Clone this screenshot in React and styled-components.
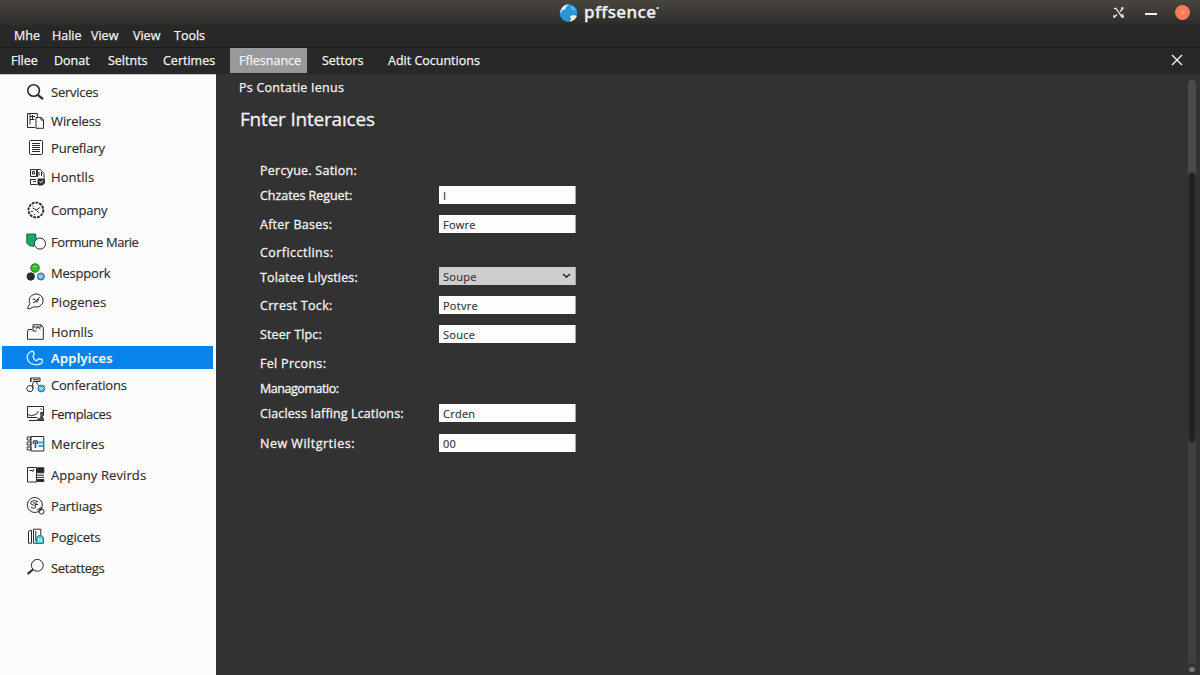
import React from 'react'
import styled, { createGlobalStyle } from 'styled-components'

const GlobalStyle = createGlobalStyle`
  * {
    box-sizing: border-box;
  }

  body {
    margin: 0;
    background: #323232;
    font-family: 'Open Sans', 'Noto Sans', sans-serif;
    overflow: hidden;
  }
`

const icons = {
  search: (
    <>
      <circle cx="7.6" cy="8.5" r="5.8" strokeWidth="1.6" />
      <path d="M11.8 12.8L17 17.2" strokeWidth="2.2" />
    </>
  ),
  wireless: (
    <>
      <path d="M9 16.5H1.5v-14h9.8v3.3M4 2.5v10.8M4 5.5h5M6.5 4v4M4 8.5h4.5" />
      <path d="M10 6.5h5l2.5 2.3v8.5H10zM15 6.5V9h2.5" />
    </>
  ),
  list: (
    <>
      <rect x="3.5" y="2.5" width="13" height="14" rx="1" />
      <path d="M6 5.5h8M6 7.5h8M6 9.5h8M6 11.5h8M6 13.5h8" />
    </>
  ),
  docs: (
    <>
      <path d="M4.5 9.5v-7h6v7zM6.5 4.5h2V7h-2zM11.5 10V2.5h3l3.5 4v5M13 5v3.5M15.5 5v4M4.5 12v5.5H11M4.5 12.500H10M7 14.5h3" />
      <path d="M12 12h6.500v4l-2 2H12z" fill="#333" />
      <path d="M13.500 14.500l1.500 1.200 2-2.200" stroke="#fff" />
    </>
  ),
  gauge: (
    <>
      <circle cx="9.9" cy="10" r="7.4" strokeWidth="1.9" strokeDasharray="2.8 1" />
      <path d="M6.5 8l3.800 2 3.500-2.500M10.300 10l2.700 3M5 11.500h2M8 14l1 1M6.500 5.500l1 1" />
    </>
  ),
  shield: (
    <>
      <path d="M.8 2h8.800l1 8-3 4.500L3 13.500 .8 11z" fill="#12ad62" stroke="#126b42" />
      <circle cx="14" cy="11.6" r="5.6" fill="#fff" />
    </>
  ),
  people: (
    <>
      <circle cx="9" cy="5" r="4.2" fill="#31bd31" stroke="#16711c" />
      <circle cx="4.7" cy="13.5" r="3.7" fill="#292d2b" />
      <circle cx="14.9" cy="13.5" r="3.5" fill="#70b2e2" stroke="#285f8c" />
      <path d="M7 4q2-2 4 0" stroke="#83ed6d" />
      <path d="M13 12.500l2 2 1.500-2" stroke="#d8efff" />
    </>
  ),
  bubble: (
    <>
      <path d="M3.900 11.500a7 6.600 0 1 1 4 3.300L3.500 16.800l-2.200-.5z" />
      <path d="M6.800 8q1.500-2.500 2.500 0t2.500-1l2-2M7 10.800l2-1.200 2 .5 1.800-3" />
    </>
  ),
  bag: (
    <>
      <path d="M6 7.500H3.200q-1.700 0-1.700 2v7.800h15.800V5.500l-2-2.700H7v6.200h3.500" />
      <path d="M7 5h7.500M10 7.200l2-2 2.500 2M15 3v2.500" />
    </>
  ),
  phone: (
    <path
      d="M5 3.500Q1 5.500 1.200 9.500q.8 6.500 8 7.200 5.500 0 7-2.400l.1-2.800-3.500-.7-2.200 2q-3.300-1.600-3.500-4.600l1.200-2.500L7.200 3.500z"
      strokeWidth="1.3"
    />
  ),
  network: (
    <>
      <path d="M4.500 7V3h9.500v3.500H7.500L6 11M10 6.500l2.500 4M5 3v4M7 4.800h6" />
      <circle cx="3.9" cy="13.6" r="3.1" />
      <path d="M7 10.500v3.500" />
      <circle cx="15.3" cy="13.5" r="3.4" fill="#56b9df" stroke="#216e91" />
      <path d="M13.500 13l2 1.500 1.500-2" stroke="#fff" />
    </>
  ),
  screen: (
    <>
      <path d="M17.500 8V2.500H1.500v11h10M1.500 10.500l4 1.200 5-1.500 2-3M3 16.500h9M14.500 4.500l1.500 1.500" />
      <path d="M14 9l3.500-1v3.500l-3 1.500M11 15.800l5.500-3 1.200 3.700h-5z" fill="#555" />
    </>
  ),
  card: (
    <>
      <path d="M5 2.500h12.800v14.500H5z" />
      <path d="M1.200 3h3.500v3H1.200zM1.200 8h3.500v3H1.200zM1.200 13h3.500v3H1.200z" />
      <path d="M7.500 10V7.500q2-1.500 4 0v2.500M9.500 8v6" stroke="#285d7c" strokeWidth="1.6" />
      <path d="M12.500 8.500H17M12.500 12H17" stroke="#3da6cb" strokeWidth="1.8" />
    </>
  ),
  report: (
    <>
      <path d="M10.500 2.500h-9V17h9zM3.500 5.500h3M8 4l-1.500 3" />
      <path d="M11.500 2.800h6.300v5h-6.300zM11.500 14.500h6.300v2h-6.300z" fill="#252525" />
      <path d="M11 10.200h7M11 12.400h7" />
    </>
  ),
  coin: (
    <>
      <circle cx="8.8" cy="9" r="7.5" />
      <path d="M12 5.700Q8 3.300 5.300 5.500q-2 3 2.800 3.700 3 .8 1.300 2.600-2 1.300-4.400-.7M7 7h4M9 8.500h3" />
      <circle cx="15.5" cy="15.5" r="2.6" />
      <path d="M11 14l5-3M12 16l4.500-3" />
    </>
  ),
  books: (
    <>
      <path d="M2.500 4.200l3-1v13h-3zM7.500 2.200h7.300v14H7.500zM9.800 4v10" />
      <path d="M10.500 10.500l2-2h3l2 2v6h-7z" fill="#45bfdf" stroke="#247f9d" />
      <path d="M12.500 14.500v-2.700h2.800v2.700h-2" stroke="#e9fbff" />
    </>
  ),
  magnifier: (
    <>
      <circle cx="11.3" cy="7.3" r="5.9" />
      <path d="M7 11.500L1.700 15.800" strokeWidth="2.2" />
    </>
  ),
}

// gap is the space above the row, track the letter spacing, both in px
const sidebarItems = [
  { icon: 'search', text: 'Services', gap: 5, track: -0.25 },
  { icon: 'wireless', text: 'Wireless', gap: 6, track: -0.12 },
  { icon: 'list', text: 'Pureflary', gap: 4, track: -0.15 },
  { icon: 'docs', text: 'Hontlls', gap: 6, track: 0.05 },
  { icon: 'gauge', text: 'Company', gap: 10, track: -0.2 },
  { icon: 'shield', text: 'Formune Marie', gap: 9, track: -0.45 },
  { icon: 'people', text: 'Mesppork', gap: 8, track: -0.2 },
  { icon: 'bubble', text: 'Piogenes', gap: 6, track: 0.05 },
  { icon: 'bag', text: 'Homlls', gap: 7 },
  { icon: 'phone', text: 'Applyices', gap: 3, track: 0.3, active: true },
  { icon: 'network', text: 'Conferations', gap: 4, track: -0.2 },
  { icon: 'screen', text: 'Femplaces', gap: 6, track: -0.45 },
  { icon: 'card', text: 'Mercires', gap: 7, track: 0.1 },
  { icon: 'report', text: 'Appany Revirds', gap: 8, track: 0.1 },
  { icon: 'coin', text: 'Partiıags', gap: 8, track: -0.1 },
  { icon: 'books', text: 'Pogicets', gap: 8, track: -0.1 },
  { icon: 'magnifier', text: 'Setattegs', gap: 8, track: -0.3 },
]

const fields = [
  { label: 'Percyue. Sation:', gap: 0, track: 0.25 },
  { label: 'Chzates Reguet:', value: 'I', gap: 6, track: -0.05 },
  { label: 'After Bases:', value: 'Fowre', gap: 10, track: 0.25 },
  { label: 'Corficctlins:', gap: 9, track: 0.45 },
  { label: 'Tolatee Lılysties:', value: 'Soupe', gap: 5, track: 0.15, select: true },
  { label: 'Crrest Tock:', value: 'Potvre', gap: 10, track: 0.3 },
  { label: 'Steer Tlpc:', value: 'Souce', gap: 10, track: 0.1 },
  { label: 'Fel Prcons:', gap: 10, track: 0.3 },
  { label: 'Managomatio:', gap: 6, track: -0.45 },
  { label: 'Ciacless Iaffing Lcations:', value: 'Crden', gap: 6, track: 0.12 },
  { label: 'New Wiltgrties:', value: '00', gap: 11, track: 0.5 },
]

const App = () => {
  return (
    <Window>
      <GlobalStyle />
      <TitleBar>
        <span />
        <Brand>
          <svg width="19" height="18" viewBox="0 0 19 18">
            <circle cx="9.5" cy="9" r="8.8" fill="#2797da" />
            <path d="M3 4Q5 .5 10 .3L7.5 2.5 6 5.5 3.5 6 2 8.5 .8 9z" fill="#e9efd9" />
            <path d="M11 12l4-1 3 1q-1.500 4-7 5.800L12 15z" fill="#f0edcf" />
            <path d="M11 2l4 1 2 4-4-1z" fill="#58b9e9" />
          </svg>
          <BrandName>pffsence<sup>•</sup></BrandName>
        </Brand>
        <Controls>
          <svg width="12" height="12" viewBox="0 0 12 12" fill="none" stroke="#e8e8e2" strokeWidth="1.3">
            <path d="M1 1.500h2L9 10h2M1 10.500l3-3M7 4.500l3-3M8 1h2.500M1 8v3M8.500 7l2 2" />
          </svg>
          <Minimize />
          <Close />
        </Controls>
      </TitleBar>

      <MenuBar>
        <MenuItem $width={38}>Mhe</MenuItem>
        <MenuItem $width={39}>Halie</MenuItem>
        <MenuItem $width={42}>View</MenuItem>
        <MenuItem $width={41}>View</MenuItem>
        <MenuItem $width={40}>Tools</MenuItem>
      </MenuBar>

      <TabBar>
        <Tab $width={43}>Fllee</Tab>
        <Tab $width={54}>Donat</Tab>
        <Tab $width={55}>Seltnts</Tab>
        <Tab $width={67}>Certimes</Tab>
        <Tab $width={77} $active>Fflesnance</Tab>
        <Tab $width={81} $indent={15}>Settors</Tab>
        <Tab $width={110}>Adit Cocuntions</Tab>
        <TabClose>
          <svg width="12" height="12" viewBox="0 0 12 12" stroke="#f2f2f2" strokeWidth="1.4">
            <path d="M1 1l10 10M11 1L1 11" />
          </svg>
        </TabClose>
      </TabBar>

      <Body>
        <Sidebar>
          {sidebarItems.map((item) => (
            <SidebarItem key={item.icon} $gap={item.gap} $track={item.track} $active={item.active}>
              <Icon viewBox="0 0 20 20" $active={item.active}>{icons[item.icon]}</Icon>
              {item.text}
            </SidebarItem>
          ))}
        </Sidebar>

        <Content>
          <Crumb>Ps Contatie Ienus</Crumb>
          <Heading>Fnter Interaıces</Heading>
          <Form>
            {fields.map((field) => (
              <Field key={field.label} $gap={field.gap}>
                <Label $drop={field.select ? 2 : 1} $track={field.track}>{field.label}</Label>
                {field.value && (
                  <Input $select={field.select}>
                    {field.value}
                    {field.select && (
                      <svg width="9" height="6" viewBox="0 0 9 6" fill="none" stroke="#222" strokeWidth="1.5">
                        <path d="M1 1l3.500 3L8 1" />
                      </svg>
                    )}
                  </Input>
                )}
              </Field>
            ))}
          </Form>
        </Content>

        <Scroll>
          <Track>
            <Thumb />
          </Track>
          <ScrollEnd />
        </Scroll>
      </Body>
    </Window>
  )
}

const Window = styled.div`
  width: 1200px;
  height: 675px;
  display: flex;
  flex-direction: column;
  color: #f2f2f2;
  background: #323232;
`

const TitleBar = styled.header`
  height: 25px;
  display: grid;
  grid-template-columns: 559px 1fr auto;
  align-items: center;
  background: linear-gradient(#47453d, #3b3a34 50%, #2c2c2a);
`

const Brand = styled.div`
  display: flex;
  align-items: center;
  gap: 6px;
  height: 24px;
`

const BrandName = styled.div`
  font-family: 'Noto Sans', sans-serif;
  font-size: 17px;
  line-height: 22px;
  font-weight: 500;
  letter-spacing: 0.35px;
  -webkit-text-stroke: 0.3px;
  margin-top: -1px;

  sup {
    font-size: 7px;
    line-height: 0;
    vertical-align: 7px;
    letter-spacing: 0;
  }
`

const Controls = styled.div`
  display: flex;
  align-items: center;
  padding-right: 10px;
  height: 24px;
`

const Minimize = styled.div`
  width: 12px;
  height: 2px;
  margin: 2px 18px 0 20px;
  background: #eeeeea;
`

const Close = styled.div`
  width: 15px;
  height: 15px;
  border-radius: 50%;
  background: radial-gradient(circle, #ff9a78 0 1.5px, #f77c58 2.5px);
`

const MenuBar = styled.nav`
  height: 22px;
  display: flex;
  align-items: center;
  padding: 0 0 1px 14px;
  background: #282828;
  font-size: 12.5px;
  -webkit-text-stroke: 0.25px;
`

const MenuItem = styled.div`
  width: ${({ $width }) => $width}px;
  white-space: nowrap;
`

const TabBar = styled.nav`
  height: 27px;
  display: flex;
  align-items: center;
  padding: 0 0 1px 11px;
  border-top: 1px solid #1c1c1c;
  background: #272827;
  font-size: 12.5px;
  -webkit-text-stroke: 0.25px;
`

const Tab = styled.div`
  width: ${({ $width }) => $width}px;
  height: 25px;
  line-height: 26px;
  white-space: nowrap;
  padding-left: ${({ $indent, $active }) => ($active ? 9 : $indent || 0)}px;
  background: ${({ $active }) => ($active ? '#98999a' : 'transparent')};
`

const TabClose = styled.div`
  margin-left: auto;
  padding: 0 17px 1px 0;
  display: flex;
`

const Body = styled.div`
  flex: 1;
  min-height: 0;
  display: flex;
`

const Sidebar = styled.aside`
  width: 216px;
  padding-right: 3px;
  background: #fcfcfc;
  border-top: 1px solid #c8c8c8;
`

const SidebarItem = styled.div`
  height: 23px;
  margin-top: ${({ $gap }) => $gap}px;
  margin-left: 2px;
  padding-left: 24px;
  display: flex;
  align-items: center;
  gap: 5px;
  white-space: nowrap;
  font-size: 13px;
  font-weight: ${({ $active }) => ($active ? 600 : 400)};
  letter-spacing: ${({ $track }) => $track || 0}px;
  -webkit-text-stroke: 0.15px;
  color: ${({ $active }) => ($active ? '#fff' : '#2c2c2c')};
  background: ${({ $active }) => ($active ? '#0783ea' : 'transparent')};
`

const Icon = styled.svg`
  width: 20px;
  height: 20px;
  flex-shrink: 0;
  fill: none;
  stroke: ${({ $active }) => ($active ? '#d7f3ff' : '#2b2b2b')};
`

const Content = styled.main`
  flex: 1;
  padding: 4px 0 0 23px;
`

const Crumb = styled.div`
  font-size: 12.5px;
  line-height: 20px;
  letter-spacing: 0.25px;
  -webkit-text-stroke: 0.25px;
`

const Heading = styled.h1`
  margin: 8px 0 0 1px;
  font-size: 19px;
  line-height: 26px;
  font-weight: 400;
  letter-spacing: -0.2px;
  -webkit-text-stroke: 0.3px;
`

const Form = styled.div`
  padding: 28px 0 0 21px;
`

const Field = styled.div`
  height: 19px;
  margin-top: ${({ $gap }) => $gap}px;
  display: grid;
  grid-template-columns: 179px 137px;
  grid-template-rows: 19px;
  align-items: start;
`

const Label = styled.div`
  padding-top: ${({ $drop }) => $drop}px;
  font-size: 12.5px;
  line-height: 19px;
  letter-spacing: ${({ $track }) => $track}px;
  -webkit-text-stroke: 0.3px;
  white-space: nowrap;
`

const Input = styled.div`
  height: 18px;
  margin-top: 1px;
  padding: 0 4px;
  display: flex;
  align-items: center;
  justify-content: space-between;
  border-right: 1px solid #a5a5a5;
  font-size: 11px;
  letter-spacing: 0.25px;
  -webkit-text-stroke: 0.15px;
  color: #333;
  background: ${({ $select }) => ($select ? '#cecece' : '#fdfdfd')};
`

const Scroll = styled.div`
  width: 12px;
  padding-top: 6px;
  display: flex;
  flex-direction: column;
`

const Track = styled.div`
  width: 8px;
  height: 584px;
  padding-top: 92px;
  border-radius: 4px;
  background: linear-gradient(#4b4b4b 0 92px, #3e4040 370px);
`

const Thumb = styled.div`
  width: 8px;
  height: 271px;
  border: 1px solid #333;
  border-radius: 4px;
  background: #212121;
`

const ScrollEnd = styled.div`
  width: 6px;
  height: 5px;
  margin: 3px 0 0 1px;
  border-radius: 50%;
  background: #777;
`

export default App
